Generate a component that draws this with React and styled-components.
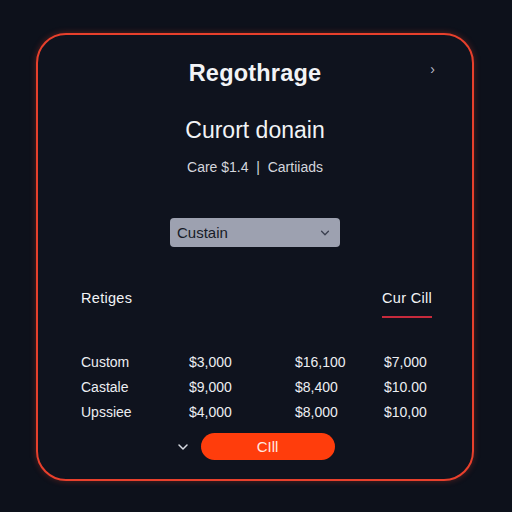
import styled, { createGlobalStyle } from "styled-components";

const Global = createGlobalStyle`
  html, body {
    margin: 0;
    padding: 0;
    background: #0d111b;
  }
  body {
    font-family: "Liberation Sans", Arial, sans-serif;
    color: #f2f3f6;
  }
`;

const Page = styled.div`
  width: 512px;
  height: 512px;
  box-sizing: border-box;
  padding: 33px 38px 31px 36px;
  display: flex;
`;

const Card = styled.div`
  flex: 1;
  border: 2px solid #e8402c;
  border-radius: 30px;
  background: #0f131e;
  box-shadow: 0 0 6px rgba(232, 64, 44, 0.35);
  display: flex;
  flex-direction: column;
  align-items: center;
  position: relative;
  padding: 21px 43px 0 43px;
`;

const Title = styled.h1`
  margin: 0;
  font-size: 23.5px;
  font-weight: 600;
  line-height: 34px;
  letter-spacing: 0.2px;
`;

const CloseChevron = styled.span`
  position: absolute;
  top: 26px;
  right: 37px;
  color: #b8bcc8;
  font-size: 14px;
`;

const Subtitle = styled.h2`
  margin: 25px 0 0;
  font-size: 23px;
  font-weight: 400;
  line-height: 30px;
`;

const Meta = styled.div`
  margin-top: 13px;
  font-size: 14px;
  color: #d4d6dd;
  line-height: 18px;
`;

const Select = styled.div`
  margin-top: 42px;
  width: 170px;
  height: 29px;
  box-sizing: border-box;
  border-radius: 4px;
  background: #9da1b0;
  color: #171b27;
  font-size: 15px;
  display: flex;
  align-items: center;
  justify-content: space-between;
  padding: 0 9px 0 7px;
`;

const TabsRow = styled.div`
  align-self: stretch;
  margin: 42px -3px 0 0;
  display: flex;
  justify-content: space-between;
  align-items: flex-start;
  font-size: 14.5px;
`;

const Tab = styled.div`
  padding-bottom: 9px;
  border-bottom: 2px solid ${p => (p.active ? "#c72a3c" : "transparent")};
  line-height: 18px;
  letter-spacing: 0.3px;
`;

const Table = styled.div`
  align-self: stretch;
  margin-top: 35px;
  display: grid;
  grid-template-columns: 108px 106px 89px auto;
  row-gap: 7px;
  font-size: 14px;
  line-height: 18px;
`;

const Cell = styled.div`
  color: #eceef2;
`;

const Footer = styled.div`
  margin-top: 12px;
  display: flex;
  align-items: center;
  gap: 11px;
`;

const ChevronDown = styled.svg`
  width: 14px;
  height: 14px;
`;

const Button = styled.button`
  width: 134px;
  height: 27px;
  border: none;
  border-radius: 14px;
  background: #ff3d0c;
  color: #ffe9e2;
  font-family: "Liberation Sans", Arial, sans-serif;
  font-size: 15px;
`;

const rows = [
  ["Custom", "$3,000", "$16,100", "$7,000"],
  ["Castale", "$9,000", "$8,400", "$10.00"],
  ["Upssiee", "$4,000", "$8,000", "$10,00"],
];

const Chevron = ({ color = "#d8dbe2", size = 14 }) => (
  <ChevronDown viewBox="0 0 14 14" style={{ width: size, height: size }}>
    <path d="M3 5l4 4 4-4" fill="none" stroke={color} strokeWidth="1.5" strokeLinecap="round" strokeLinejoin="round" />
  </ChevronDown>
);

export default function App() {
  return (
    <>
      <Global />
      <Page>
        <Card>
          <CloseChevron>›</CloseChevron>
          <Title>Regothrage</Title>
          <Subtitle>Curort donain</Subtitle>
          <Meta>Care $1.4 &nbsp;|&nbsp; Cartiiads</Meta>
          <Select>
            <span>Custain</span>
            <Chevron color="#3a3f4f" size={12} />
          </Select>
          <TabsRow>
            <Tab>Retiges</Tab>
            <Tab active>Cur Cill</Tab>
          </TabsRow>
          <Table>
            {rows.map(r => r.map((c, i) => <Cell key={r[0] + i}>{c}</Cell>))}
          </Table>
          <Footer>
            <Chevron />
            <Button>CIll</Button>
          </Footer>
        </Card>
      </Page>
    </>
  );
}
